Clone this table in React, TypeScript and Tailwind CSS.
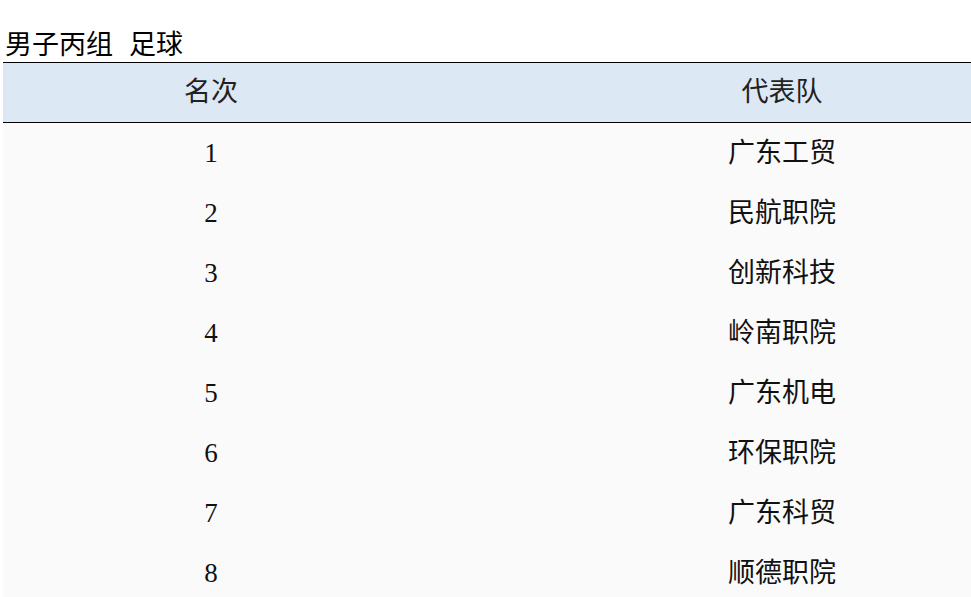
import React from "react";

const rows = [
  ["1", "广东工贸"],
  ["2", "民航职院"],
  ["3", "创新科技"],
  ["4", "岭南职院"],
  ["5", "广东机电"],
  ["6", "环保职院"],
  ["7", "广东科贸"],
  ["8", "顺德职院"],
];

export default function App() {
  return (
    <div
      className="w-[971px] h-[597px] overflow-hidden bg-white text-black"
      style={{ fontFamily: '"Liberation Serif", "Noto Sans CJK SC", serif' }}
    >
      <div className="pl-[3px] pt-[28px]">
        <div className="h-[34px] leading-[34px] text-[27px] pl-[2px] flex">
          <span>男子丙组</span>
          <span className="ml-[16px]">足球</span>
        </div>
        <div className="w-[1142px] border-t border-black">
          <div className="flex h-[60px] items-center bg-[#dde8f5] border-b border-black text-[27px] text-[#222]">
            <div className="w-[416px] text-center">名次</div>
            <div className="w-[726px] text-center">代表队</div>
          </div>
          {rows.map(([n, t]) => (
            <div key={n} className="flex h-[60px] items-center bg-[#fafafa] text-[27px] text-[#111]">
              <div className="w-[416px] text-center pt-[1px]">{n}</div>
              <div className="w-[726px] text-center pt-[1px]">{t}</div>
            </div>
          ))}
        </div>
      </div>
    </div>
  );
}
